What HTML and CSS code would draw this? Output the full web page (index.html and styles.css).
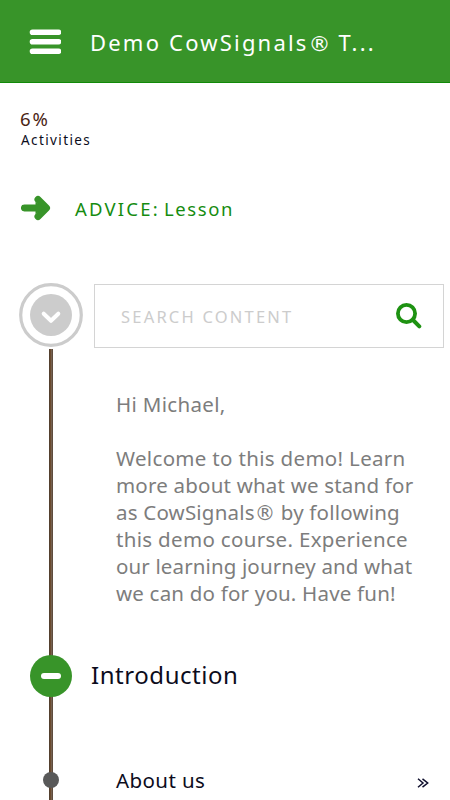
FILE: index.html
```html
<!DOCTYPE html>
<html lang="en">
<head>
    <meta charset="UTF-8">
    <meta name="viewport" content="width=device-width, initial-scale=1.0">
    <title>Demo CowSignals® Training</title>
    <link rel="stylesheet" href="styles.css">
</head>
<body>

    <header class="topbar">
        <svg class="menu" width="32" height="26" viewBox="0 0 32 26">
            <path d="M3.5 3.2H29.5M3.5 12.7H29.5M3.5 22.2H29.5" stroke="#fff" stroke-width="5.6" stroke-linecap="round"/>
        </svg>
        <h1 class="title">Demo CowSignals<span class="reg">®</span> T...</h1>
    </header>

    <section class="progress">
        <div class="percent">6%</div>
        <div class="activities">Activities</div>
    </section>

    <a class="advice">
        <svg width="30" height="26" viewBox="0 0 30 26">
            <path d="M3.4 13H22M17 4.5L25.5 13L17 21.5" fill="none" stroke="#389429" stroke-width="7" stroke-linecap="round" stroke-linejoin="round"/>
            <path d="M14.5 7L24 13L14.5 19Z" fill="#389429"/>
        </svg>
        <span class="advice-label">ADVICE:</span>
        <span class="advice-type">Lesson</span>
    </a>

    <div class="search-row">
        <svg class="collapse" width="64" height="64" viewBox="0 0 64 64">
            <circle cx="32" cy="32" r="30.3" fill="#fff" stroke="#ccc" stroke-width="3.2"/>
            <circle cx="32" cy="32" r="21" fill="#ccc"/>
            <path d="M24.7 30.7L32 37.8L39.3 30.7" fill="none" stroke="#fff" stroke-width="4" stroke-linecap="round" stroke-linejoin="round"/>
        </svg>
        <div class="search">
            <span class="placeholder">SEARCH CONTENT</span>
            <svg width="26" height="26" viewBox="0 0 26 26">
                <circle cx="10.5" cy="10.5" r="8.6" fill="none" stroke="#1e9212" stroke-width="3.8"/>
                <path d="M17 17L23.3 23.3" stroke="#1e9212" stroke-width="4" stroke-linecap="round"/>
            </svg>
        </div>
    </div>

    <main class="timeline">
        <div class="intro">
            <p class="loose">Hi Michael,</p>
            <p><span class="loose">Welcome to this demo! Learn</span><br>
            more about what we stand for<br>
            as CowSignals<span class="reg">®</span> by following<br>
            <span class="loose">this demo course. Experience</span><br>
            <span class="tight">our learning journey and what</span><br>
            we can do for you. Have fun!</p>
        </div>

        <div class="chapter">
            <span class="toggle"><span class="minus"></span></span>
            <h2 class="chapter-name">Introduction</h2>
        </div>

        <div class="lesson">
            <span class="dot"></span>
            <span class="lesson-name">About us</span>
            <svg class="arrows" width="12" height="10" viewBox="0 0 12 10">
                <path d="M1 .8L6 5L1 9.2M5.5 .8L10.7 5L5.5 9.2" fill="none" stroke="#10102e" stroke-width="1.5"/>
            </svg>
        </div>
    </main>

</body>
</html>
```

FILE: styles.css
```css
* {
    box-sizing: border-box;
}
body {
    margin: 0;
    height: 800px;
    overflow: hidden;
    display: flex;
    flex-direction: column;
    font-family: "Noto Sans", sans-serif;
    background-color: #fff;
    color: #0c0c1c;
    white-space: nowrap;
}
svg {
    display: block;
    flex: none;
}
h1, h2, p {
    margin: 0;
    font-weight: 400;
}
.reg {
    font-family: "DejaVu Sans", sans-serif;
    font-size: 1em;
    line-height: 1;
    letter-spacing: 0;
}
.topbar {
    height: 83px;
    flex: none;
    display: flex;
    align-items: center;
    padding: 2px 0 0 29px;
    background-color: #389429;
    border-bottom: 1px solid #108a08;
    color: #fff;
}
.title {
    margin-left: 29px;
    font-size: 22px;
    line-height: 30px;
    letter-spacing: 2.2px;
}
.progress {
    height: 96px;
    flex: none;
    padding: 24px 0 0 20px;
}
.percent {
    font-size: 18.5px;
    line-height: 23px;
    letter-spacing: 1.8px;
    color: #4a2413;
}
.activities {
    padding-left: 1px;
    font-size: 13.5px;
    line-height: 20px;
    letter-spacing: 1.4px;
}
.advice {
    height: 58px;
    flex: none;
    display: flex;
    align-items: center;
    padding-left: 21px;
    font-size: 18.5px;
    color: #168c10;
}
.advice-label {
    width: 89px;
    margin-left: 24px;
    letter-spacing: 2.2px;
}
.advice-type {
    letter-spacing: 1.6px;
}
.search-row {
    height: 66px;
    flex: none;
    display: flex;
    align-items: flex-start;
    margin-top: 46px;
    padding-left: 19px;
}
.search {
    width: 350px;
    height: 64px;
    display: flex;
    align-items: center;
    justify-content: space-between;
    margin: 1px 0 0 11px;
    padding: 0 21px 0 26px;
    border: 1px solid #d4d4d4;
}
.placeholder {
    font-size: 16.5px;
    letter-spacing: 2.2px;
    color: #ccc;
}
/* vertical line that runs behind the chapter markers */
.timeline {
    flex: 1;
    background: linear-gradient(to right, #54402e 1px, #6b4a2e 1px, #6b4a2e 2px, #75604f 2px, #75604f 3px, #5e4c3e 3px) 49px 0 / 4px 100% no-repeat;
}
.intro {
    padding: 42px 0 0 116px;
    font-size: 20.5px;
    line-height: 27px;
    letter-spacing: .2px;
    color: #7d7d7d;
}
.intro p + p {
    margin-top: 27px;
}
.loose {
    letter-spacing: .32px;
}
.tight {
    letter-spacing: .13px;
}
.chapter {
    height: 42px;
    display: flex;
    align-items: center;
    margin-top: 48px;
    padding-left: 30px;
}
.toggle {
    width: 42px;
    height: 42px;
    display: flex;
    align-items: center;
    justify-content: center;
    border-radius: 50%;
    background-color: #389429;
}
.minus {
    width: 20px;
    height: 6px;
    border-radius: 3px;
    background-color: #fff;
}
.chapter-name {
    margin: -2px 0 0 19px;
    font-size: 24px;
    line-height: 32px;
    letter-spacing: .55px;
}
.lesson {
    height: 30px;
    display: flex;
    align-items: center;
    margin-top: 68px;
    padding: 0 21px 0 43px;
}
.dot {
    width: 16px;
    height: 16px;
    border-radius: 50%;
    background-color: #595959;
}
.lesson-name {
    flex: 1;
    margin-left: 57px;
    font-size: 20.5px;
    letter-spacing: .4px;
}
.arrows {
    margin-top: 6px;
}
```
